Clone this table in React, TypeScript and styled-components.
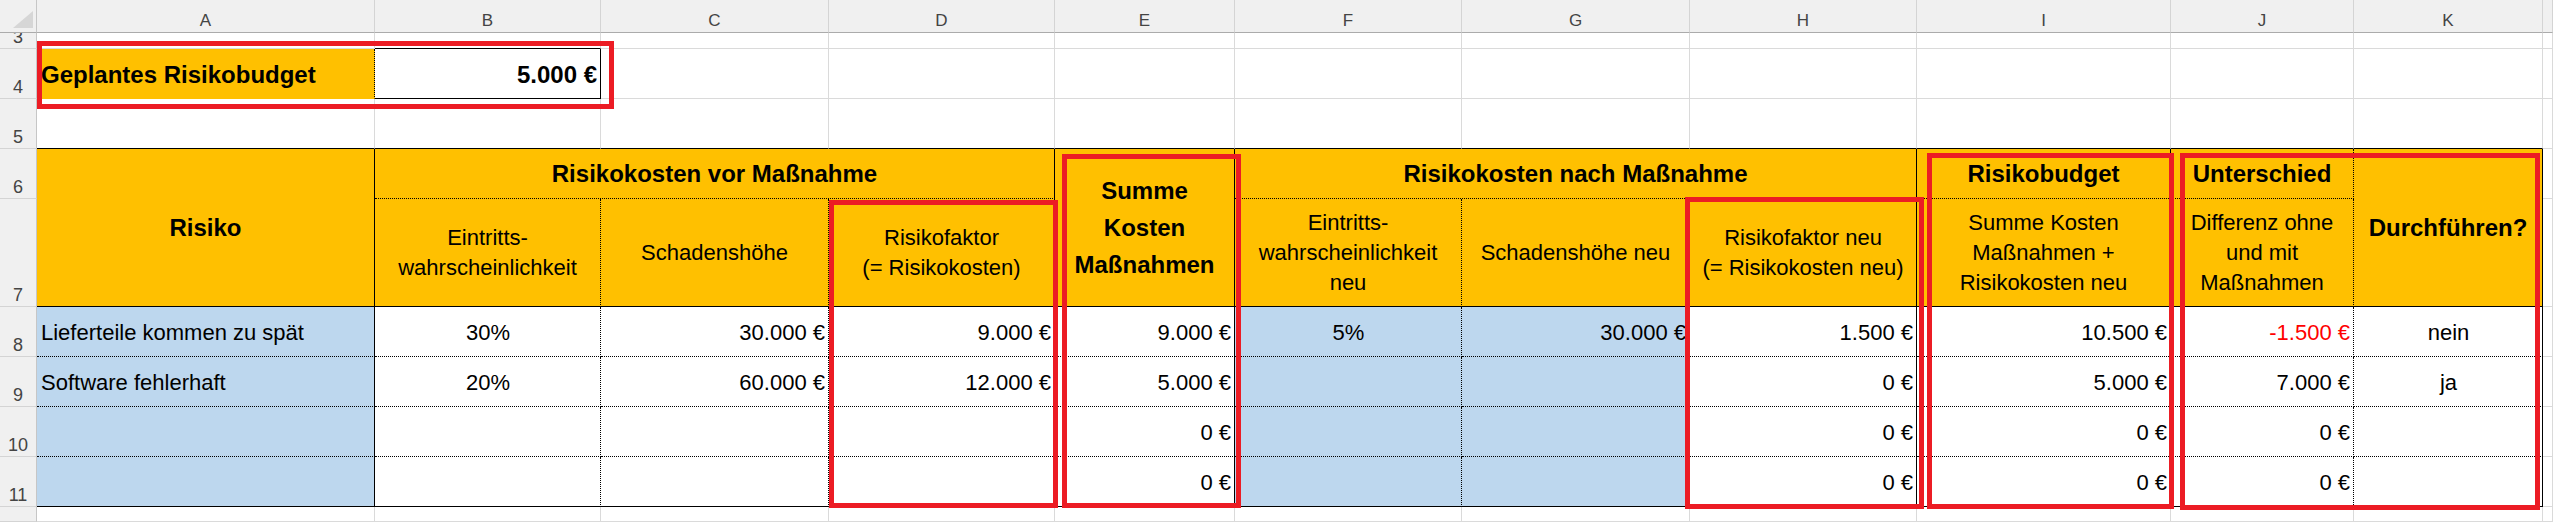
import React from 'react';
import styled, { createGlobalStyle } from 'styled-components';

type Edge = 'g' | 's' | 'd' | 'n';
type Fill = 'white' | 'orange' | 'blue';

const COLUMNS = '37px 338px 226px 228px 226px 180px 227px 228px 227px 254px 183px 189px 10px';
const ROWS = '33px 16px 50px 50px 50px 108px 50px 50px 50px 50px 15px';

const fills: Record<Fill, string> = {
    white: '#ffffff',
    orange: '#FFC000',
    blue: '#BDD7EE',
};

const edge = (e: Edge = 'g') => {
    switch (e) {
        case 's': return '1px solid #000';
        case 'd': return '1px dotted #000';
        case 'n': return '1px solid transparent';
        default: return '1px solid #DADADA';
    }
};

const GlobalStyle = createGlobalStyle`
    html, body {
        margin: 0;
        padding: 0;
        background: #fff;
    }
    body {
        width: 2553px;
        height: 522px;
        overflow: hidden;
        font-family: "Liberation Sans", Arial, sans-serif;
    }
`;

const Stack = styled.div`
    display: grid;
    width: 2553px;
    height: 522px;
    overflow: hidden;

    & > * {
        grid-area: 1 / 1;
    }
`;

const Sheet = styled.div`
    display: grid;
    grid-template-columns: ${COLUMNS};
    grid-template-rows: ${ROWS};
`;

const Annotations = styled(Sheet)`
    pointer-events: none;
    z-index: 1;
`;

const Corner = styled.div`
    box-sizing: border-box;
    background: #F0F0F0;
    border-right: 1px solid #C6C6C6;
    border-bottom: 1px solid #ABABAB;
    display: flex;
    align-items: flex-end;
    justify-content: flex-end;
    padding: 0 3px 4px 0;
`;

const ColHead = styled.div`
    box-sizing: border-box;
    background: #F0F0F0;
    border-right: 1px solid #D4D4D4;
    border-bottom: 1px solid #ABABAB;
    color: #444;
    font-size: 17px;
    line-height: 20px;
    display: flex;
    justify-content: center;
    align-items: flex-end;
    padding-bottom: 1px;
`;

const RowHead = styled.div`
    box-sizing: border-box;
    background: #F0F0F0;
    border-right: 1px solid #C6C6C6;
    border-bottom: 1px solid #D4D4D4;
    color: #444;
    font-size: 18px;
    line-height: 20px;
    display: flex;
    justify-content: center;
    align-items: flex-end;
    padding-bottom: 1px;
    overflow: hidden;
`;

interface CellProps {
    $fill?: Fill;
    $h?: 'left' | 'center' | 'right';
    $mid?: boolean;
    $bold?: boolean;
    $r?: Edge;
    $b?: Edge;
    $cols?: number;
    $rows?: number;
    $neg?: boolean;
    $lh?: number;
}

const Cell = styled.div<CellProps>`
    box-sizing: border-box;
    min-width: 0;
    overflow: hidden;
    display: flex;
    grid-column: span ${p => p.$cols ?? 1};
    grid-row: span ${p => p.$rows ?? 1};
    background: ${p => fills[p.$fill ?? 'white']};
    border-right: ${p => edge(p.$r)};
    border-bottom: ${p => edge(p.$b)};
    justify-content: ${p => p.$h === 'right' ? 'flex-end' : p.$h === 'center' ? 'center' : 'flex-start'};
    align-items: ${p => p.$mid ? 'center' : 'flex-end'};
    padding: ${p => p.$mid ? '0 3px' : '0 3px 10px 4px'};
    color: ${p => p.$neg ? '#FF0000' : '#000'};
    font-size: ${p => p.$bold ? 24 : 22}px;
    font-weight: ${p => p.$bold ? 700 : 400};
    line-height: ${p => p.$lh ?? 26}px;
    text-align: center;
    white-space: pre-line;
`;

const RedFrame = styled.div<{ $col: string; $row: string; $m: string }>`
    box-sizing: border-box;
    grid-column: ${p => p.$col};
    grid-row: ${p => p.$row};
    margin: ${p => p.$m};
    border: 5px solid #EC1C24;
`;

const LETTERS = ['A', 'B', 'C', 'D', 'E', 'F', 'G', 'H', 'I', 'J', 'K', ''];

interface Risk {
    n: number;
    risk: string;
    p: string;
    dmg: string;
    factor: string;
    sum: string;
    pNew: string;
    dmgNew: string;
    factorNew: string;
    budget: string;
    diff: string;
    go: string;
}

const risks: Risk[] = [
    { n: 8, risk: 'Lieferteile kommen zu spät', p: '30%', dmg: '30.000 €', factor: '9.000 €', sum: '9.000 €', pNew: '5%', dmgNew: '30.000 €', factorNew: '1.500 €', budget: '10.500 €', diff: '-1.500 €', go: 'nein' },
    { n: 9, risk: 'Software fehlerhaft', p: '20%', dmg: '60.000 €', factor: '12.000 €', sum: '5.000 €', pNew: '', dmgNew: '', factorNew: '0 €', budget: '5.000 €', diff: '7.000 €', go: 'ja' },
    { n: 10, risk: '', p: '', dmg: '', factor: '', sum: '0 €', pNew: '', dmgNew: '', factorNew: '0 €', budget: '0 €', diff: '0 €', go: '' },
    { n: 11, risk: '', p: '', dmg: '', factor: '', sum: '0 €', pNew: '', dmgNew: '', factorNew: '0 €', budget: '0 €', diff: '0 €', go: '' },
];

function CornerMark() {
    return (
        <svg width="20" height="17" viewBox="0 0 20 17">
            <polygon points="20,0 20,17 0,17" fill="#D6D6D6" />
        </svg>
    );
}

function BlankCells({ count, b }: { count: number; b?: Edge }) {
    return (
        <>
            {Array.from({ length: count }, (_, i) => (
                <Cell key={i} $b={b} />
            ))}
        </>
    );
}

function RiskRow({ r, last }: { r: Risk; last: boolean }) {
    const b: Edge = last ? 's' : 'd';
    return (
        <>
            <RowHead>{r.n}</RowHead>
            <Cell $fill="blue" $r="s" $b={b}>{r.risk}</Cell>
            <Cell $h="center" $r="d" $b={b}>{r.p}</Cell>
            <Cell $h="right" $r="d" $b={b}>{r.dmg}</Cell>
            <Cell $h="right" $r="s" $b={b}>{r.factor}</Cell>
            <Cell $h="right" $r="s" $b={b}>{r.sum}</Cell>
            <Cell $fill="blue" $h="center" $r="d" $b={b}>{r.pNew}</Cell>
            <Cell $fill="blue" $h="right" $r="d" $b={b}>{r.dmgNew}</Cell>
            <Cell $h="right" $r="s" $b={b}>{r.factorNew}</Cell>
            <Cell $h="right" $r="s" $b={b}>{r.budget}</Cell>
            <Cell $h="right" $r="d" $b={b} $neg={r.diff.startsWith('-')}>{r.diff}</Cell>
            <Cell $h="center" $r="s" $b={b}>{r.go}</Cell>
            <Cell />
        </>
    );
}

function App() {
    return (
        <>
            <GlobalStyle />
            <Stack>
                <Sheet>
                    <Corner><CornerMark /></Corner>
                    {LETTERS.map((l, i) => <ColHead key={i}>{l}</ColHead>)}

                    <RowHead>3</RowHead>
                    <Cell />
                    <Cell $b="s" />
                    <BlankCells count={10} />

                    <RowHead>4</RowHead>
                    <Cell $fill="orange" $bold $r="d" $b="n">Geplantes Risikobudget</Cell>
                    <Cell $bold $h="right" $r="s" $b="s">5.000 €</Cell>
                    <BlankCells count={10} />

                    <RowHead>5</RowHead>
                    <BlankCells count={11} b="s" />
                    <Cell />

                    <RowHead>6</RowHead>
                    <Cell $fill="orange" $bold $mid $h="center" $rows={2} $r="s" $b="s">Risiko</Cell>
                    <Cell $fill="orange" $bold $mid $h="center" $cols={3} $r="s" $b="d">Risikokosten vor Maßnahme</Cell>
                    <Cell $fill="orange" $bold $mid $h="center" $rows={2} $r="s" $b="s" $lh={37}>{'Summe\nKosten\nMaßnahmen'}</Cell>
                    <Cell $fill="orange" $bold $mid $h="center" $cols={3} $r="s" $b="d">Risikokosten nach Maßnahme</Cell>
                    <Cell $fill="orange" $bold $mid $h="center" $r="s" $b="d">Risikobudget</Cell>
                    <Cell $fill="orange" $bold $mid $h="center" $r="d" $b="d">Unterschied</Cell>
                    <Cell $fill="orange" $bold $mid $h="center" $rows={2} $r="s" $b="s">Durchführen?</Cell>
                    <Cell />

                    <RowHead>7</RowHead>
                    <Cell $fill="orange" $mid $h="center" $r="d" $b="s" $lh={30}>{'Eintritts-\nwahrscheinlichkeit'}</Cell>
                    <Cell $fill="orange" $mid $h="center" $r="d" $b="s" $lh={30}>Schadenshöhe</Cell>
                    <Cell $fill="orange" $mid $h="center" $r="s" $b="s" $lh={30}>{'Risikofaktor\n(= Risikokosten)'}</Cell>
                    <Cell $fill="orange" $mid $h="center" $r="d" $b="s" $lh={30}>{'Eintritts-\nwahrscheinlichkeit\nneu'}</Cell>
                    <Cell $fill="orange" $mid $h="center" $r="d" $b="s" $lh={30}>Schadenshöhe neu</Cell>
                    <Cell $fill="orange" $mid $h="center" $r="s" $b="s" $lh={30}>{'Risikofaktor neu\n(= Risikokosten neu)'}</Cell>
                    <Cell $fill="orange" $mid $h="center" $r="s" $b="s" $lh={30}>{'Summe Kosten\nMaßnahmen +\nRisikokosten neu'}</Cell>
                    <Cell $fill="orange" $mid $h="center" $r="d" $b="s" $lh={30}>{'Differenz ohne\nund mit\nMaßnahmen'}</Cell>
                    <Cell />

                    {risks.map((r, i) => (
                        <RiskRow key={r.n} r={r} last={i === risks.length - 1} />
                    ))}

                    <RowHead />
                    <BlankCells count={12} />
                </Sheet>

                <Annotations>
                    <RedFrame $col="2 / 4" $row="3 / 4" $m="-8px -13px -10px 0" />
                    <RedFrame $col="5 / 6" $row="6 / 11" $m="1px -3px -1px 0" />
                    <RedFrame $col="6 / 7" $row="5 / 11" $m="5px -6px -1px 7px" />
                    <RedFrame $col="9 / 10" $row="6 / 11" $m="-2px -7px -2px -5px" />
                    <RedFrame $col="10 / 11" $row="5 / 11" $m="4px -3px -2px 10px" />
                    <RedFrame $col="11 / 13" $row="5 / 11" $m="4px 3px -3px 9px" />
                </Annotations>
            </Stack>
        </>
    );
}

export default App;
